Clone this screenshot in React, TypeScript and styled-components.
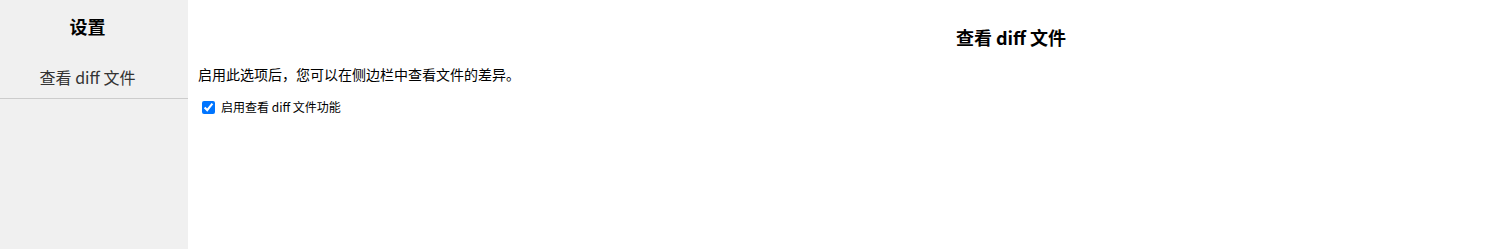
import React from "react";
import styled, { createGlobalStyle } from "styled-components";

const Global = createGlobalStyle`
  html, body { margin: 0; padding: 0; background: #fff; }
  body { font-family: "Noto Sans CJK SC", "Noto Sans", sans-serif; color: #000; }
`;

const Layout = styled.div`
  display: flex;
  height: 249px;
  overflow: hidden;
`;

const Sidebar = styled.aside`
  width: 188px;
  flex-shrink: 0;
  background: #f0f0f0;
  display: flex;
  flex-direction: column;
`;

const SideTitle = styled.h2`
  margin: 0;
  padding: 14px 13px 0 0;
  height: 40px;
  box-sizing: border-box;
  text-align: center;
  font-size: 18px;
  font-weight: bold;
  line-height: 24px;
`;

const SideItem = styled.div`
  padding: 26px 13px 10px 0;
  text-align: center;
  font-size: 16px;
  color: #333;
  line-height: 22px;
  border-bottom: 1px solid #ccc;
`;

const Main = styled.main`
  flex: 1;
  padding: 0 10px;
  min-width: 0;
`;

const Heading = styled.h3`
  margin: 24px 0 0;
  padding-left: 346px;
  text-align: center;
  font-size: 18px;
  font-weight: bold;
  line-height: 26px;
`;

const Desc = styled.p`
  margin: 14px 0 0;
  font-size: 14px;
  line-height: 20px;
`;

const CheckRow = styled.label`
  display: flex;
  align-items: center;
  margin-top: 15px;
  font-size: 12px;
  line-height: 16px;
`;

const Box = styled.input`
  margin: 0 6px 0 4px;
  width: 13px;
  height: 13px;
`;

export default function App() {
  return (
    <>
      <Global />
      <Layout>
        <Sidebar>
          <SideTitle>设置</SideTitle>
          <SideItem>查看 diff 文件</SideItem>
        </Sidebar>
        <Main>
          <Heading>查看 diff 文件</Heading>
          <Desc>启用此选项后，您可以在侧边栏中查看文件的差异。</Desc>
          <CheckRow>
            <Box type="checkbox" defaultChecked />
            启用查看 diff 文件功能
          </CheckRow>
        </Main>
      </Layout>
    </>
  );
}
